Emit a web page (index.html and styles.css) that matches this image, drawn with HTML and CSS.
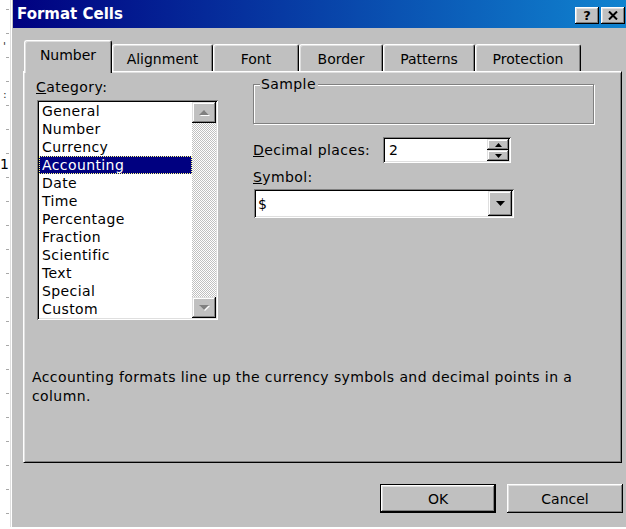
FILE: index.html
```html
<!DOCTYPE html>
<html lang="en">
<head>
<meta charset="utf-8">
<title>Format Cells</title>
<link rel="stylesheet" href="styles.css">
</head>
<body>
<div class="screen">
  <!-- worksheet cells peeking out from behind the dialog -->
  <div class="sheet-edge">
    <div class="sheet-row first"></div>
    <div class="sheet-row"></div>
    <div class="sheet-row"><span class="mark">'</span></div>
    <div class="sheet-row"></div>
    <div class="sheet-row"><span class="mark">:</span></div>
    <div class="sheet-row"></div>
    <div class="sheet-row"></div>
    <div class="sheet-row"><span class="digit">1</span></div>
  </div>

  <div class="dialog">
    <div class="titlebar">
      <span class="title">Format Cells</span>
      <div class="caption-buttons">
        <span class="cap-btn help">?</span>
        <span class="cap-btn close">
          <svg width="10" height="9" viewBox="0 0 10 9"><path d="M1 0.5 L9 8.5 M9 0.5 L1 8.5" stroke="#000" stroke-width="2" fill="none"/></svg>
        </span>
      </div>
    </div>

    <div class="dialog-body">
      <div class="tabs">
        <div class="tab active w-number">Number</div>
        <div class="tab w-alignment">Alignment</div>
        <div class="tab w-font">Font</div>
        <div class="tab w-border">Border</div>
        <div class="tab w-patterns">Patterns</div>
        <div class="tab w-protection">Protection</div>
      </div>

      <div class="panel">
        <div class="panel-top">
          <div class="category">
            <div class="label"><u>C</u>ategory:</div>
            <div class="listbox">
              <ul class="items">
                <li>General</li>
                <li>Number</li>
                <li>Currency</li>
                <li class="selected">Accounting</li>
                <li>Date</li>
                <li>Time</li>
                <li>Percentage</li>
                <li>Fraction</li>
                <li>Scientific</li>
                <li>Text</li>
                <li>Special</li>
                <li>Custom</li>
              </ul>
              <div class="vscroll">
                <div class="sbtn">
                  <svg width="13" height="8" viewBox="0 0 13 8"><polygon points="2,7 7,2 12,7" fill="#fff"/><polygon points="1,6 6,1 11,6" fill="#808080"/></svg>
                </div>
                <div class="track"></div>
                <div class="sbtn">
                  <svg width="13" height="8" viewBox="0 0 13 8"><polygon points="2,2 12,2 7,7" fill="#fff"/><polygon points="1,1 11,1 6,6" fill="#808080"/></svg>
                </div>
              </div>
            </div>
          </div>

          <div class="options">
            <div class="sample">
              <span class="sample-label">Sample</span>
            </div>

            <div class="decimal-row">
              <div class="label decimal-label"><u>D</u>ecimal places:</div>
              <div class="spin field">
                <span class="value">2</span>
                <div class="spin-btns">
                  <div class="spin-btn"><svg width="7" height="4" viewBox="0 0 7 4"><polygon points="0,4 3.5,0 7,4" fill="#000"/></svg></div>
                  <div class="spin-btn"><svg width="7" height="4" viewBox="0 0 7 4"><polygon points="0,0 7,0 3.5,4" fill="#000"/></svg></div>
                </div>
              </div>
            </div>

            <div class="label symbol-label"><u>S</u>ymbol:</div>
            <div class="combo field">
              <span class="value">$</span>
              <div class="drop-btn"><svg width="9" height="5" viewBox="0 0 9 5"><polygon points="0,0 9,0 4.5,5" fill="#000"/></svg></div>
            </div>
          </div>
        </div>

        <p class="desc">Accounting formats line up the currency symbols and decimal points in a column.</p>
      </div>

      <div class="actions">
        <span class="btn default">OK</span>
        <span class="btn">Cancel</span>
      </div>
    </div>
  </div>
</div>
</body>
</html>
```

FILE: styles.css
```css
* { box-sizing: border-box; }

html, body { margin: 0; padding: 0; }

body {
  width: 626px;
  height: 529px;
  overflow: hidden;
  background: #fff;
  font-family: "DejaVu Sans", "Liberation Sans", sans-serif;
  font-size: 14px;
  letter-spacing: 0.4px;
  color: #000;
}

.screen {
  display: flex;
  height: 529px;
}

/* ---- worksheet strip ---- */
.sheet-edge {
  width: 10px;
  flex: none;
  overflow: hidden;
  display: flex;
  flex-direction: column;
  background: linear-gradient(to bottom, #a8a8a8 0 1px, transparent 1px) 6px 9px / 3px 24px repeat-y;
}

.sheet-row {
  height: 24px;
  flex: none;
  line-height: 24px;
  white-space: nowrap;
}

.sheet-row.first { height: 9px; }

.sheet-row .mark {
  font-size: 11px;
  color: #333;
  padding-left: 3px;
}

.sheet-row .digit {
  display: block;
  margin-top: -1px;
}

/* ---- dialog frame ---- */
.dialog {
  width: 622px;
  height: 527px;
  flex: none;
  background: #c0c0c0;
  border-left: 1px solid #dfdfdf;
  box-shadow: inset 1px 0 #fff;
  padding: 0 3px 0 2px;
  display: flex;
  flex-direction: column;
}

.titlebar {
  height: 28px;
  flex: none;
  display: flex;
  align-items: center;
  padding: 0 4px 0 4px;
  background: linear-gradient(to right, #000080, #1084d0);
}

.title {
  color: #fff;
  font-weight: bold;
  font-size: 15px;
  letter-spacing: 0;
}

.caption-buttons {
  margin-left: auto;
  display: flex;
  gap: 2px;
  margin-top: 2px;
}

.cap-btn {
  width: 24px;
  height: 17px;
  display: flex;
  align-items: center;
  justify-content: center;
  background: #c0c0c0;
  font-weight: bold;
  font-size: 13px;
  letter-spacing: 0;
  line-height: 1;
  box-shadow: inset -1px -1px #000, inset 1px 1px #fff, inset -2px -2px #808080, inset 2px 2px #dfdfdf;
}

/* ---- body ---- */
.dialog-body {
  flex: 1;
  display: flex;
  flex-direction: column;
  padding: 12px 7px 0 10px;
}

.tabs {
  height: 31px;
  flex: none;
  display: flex;
  align-items: flex-end;
  padding-left: 1px;
  position: relative;
  z-index: 1;
  letter-spacing: 0;
}

.tab {
  height: 27px;
  flex: none;
  display: flex;
  align-items: center;
  justify-content: center;
  padding-top: 2px;
  background: #c0c0c0;
  border: 1px solid #fff;
  border-right-color: #000;
  border-bottom: none;
  border-radius: 3px 3px 0 0;
  box-shadow: inset 1px 1px #dfdfdf, inset -1px 0 #808080;
}

.tab.active {
  height: 33px;
  margin-bottom: -2px;
  padding-top: 0;
  padding-bottom: 4px;
}

.w-number { width: 88px; }
.w-alignment { width: 101px; }
.w-font { width: 86px; }
.w-border { width: 84px; }
.w-patterns { width: 92px; }
.w-protection { width: 106px; }

.panel {
  height: 392px;
  flex: none;
  border: 1px solid;
  border-color: #fff #000 #000 #fff;
  box-shadow: inset 1px 1px #dfdfdf, inset -1px -1px #808080;
  padding: 6px 12px 0 12px;
  display: flex;
  flex-direction: column;
}

.panel-top {
  display: flex;
  align-items: flex-start;
}

.label {
  line-height: 18px;
  height: 18px;
  white-space: nowrap;
}

.category {
  width: 182px;
  flex: none;
}

.listbox {
  margin-top: 4px;
  margin-left: 1px;
  width: 181px;
  height: 220px;
  background: #fff;
  padding: 2px;
  display: flex;
  box-shadow: inset 1px 1px #808080, inset -1px -1px #fff, inset 2px 2px #000, inset -2px -2px #dfdfdf;
}

.items {
  list-style: none;
  margin: 0;
  padding: 0;
  flex: 1;
}

.items li {
  height: 18px;
  line-height: 18px;
  padding-left: 3px;
  white-space: nowrap;
}

.items li.selected {
  background: #000080;
  color: #fff;
  outline: 1px dotted #ffff80;
  outline-offset: -1px;
}

.vscroll {
  width: 24px;
  flex: none;
  display: flex;
  flex-direction: column;
}

.sbtn {
  height: 21px;
  flex: none;
  display: flex;
  align-items: center;
  justify-content: center;
  background: #c0c0c0;
  box-shadow: inset -1px -1px #000, inset 1px 1px #dfdfdf, inset -2px -2px #808080, inset 2px 2px #fff;
}

.track {
  flex: 1;
  background-color: #fff;
  background-image: conic-gradient(#c0c0c0 25%, #fff 0 50%, #c0c0c0 0 75%, #fff 0);
  background-size: 2px 2px;
}

/* right column */
.options {
  margin-left: 35px;
  width: 341px;
  flex: none;
  padding-top: 6px;
}

.sample {
  position: relative;
  height: 40px;
  border: 1px solid #808080;
  box-shadow: 1px 1px #fff, inset 1px 1px #fff;
}

.sample-label {
  position: absolute;
  left: 6px;
  top: -10px;
  padding: 0 2px 0 1px;
  background: #c0c0c0;
  line-height: 18px;
}

.decimal-row {
  display: flex;
  align-items: center;
  margin-top: 13px;
}

.decimal-label { width: 130px; }

.field {
  background: #fff;
  padding: 2px;
  display: flex;
  align-items: stretch;
  box-shadow: inset 1px 1px #808080, inset -1px -1px #fff, inset 2px 2px #000, inset -2px -2px #dfdfdf;
}

.field .value {
  flex: 1;
  display: flex;
  align-items: center;
}

.spin {
  width: 128px;
  height: 26px;
}

.spin .value { padding-left: 4px; }

.spin-btns {
  width: 22px;
  display: flex;
  flex-direction: column;
}

.spin-btn {
  flex: 1;
  display: flex;
  align-items: center;
  justify-content: center;
  background: #c0c0c0;
  box-shadow: inset -1px -1px #000, inset 1px 1px #dfdfdf, inset -2px -2px #808080, inset 2px 2px #fff;
}

.symbol-label { margin-top: 5px; }

.combo {
  margin-top: 3px;
  margin-left: 1px;
  width: 260px;
  height: 29px;
}

.combo .value { padding-left: 2px; }

.drop-btn {
  width: 24px;
  display: flex;
  align-items: center;
  justify-content: center;
  background: #c0c0c0;
  box-shadow: inset -1px -1px #000, inset 1px 1px #dfdfdf, inset -2px -2px #808080, inset 2px 2px #fff;
}

.desc {
  margin: 48px 0 0 -4px;
  width: 575px;
  line-height: 19px;
}

/* ---- buttons ---- */
.actions {
  display: flex;
  justify-content: flex-end;
  gap: 11px;
  margin-top: 21px;
  margin-right: -1px;
  letter-spacing: 0;
}

.btn {
  width: 116px;
  height: 29px;
  display: flex;
  align-items: center;
  justify-content: center;
  background: #c0c0c0;
  box-shadow: inset -1px -1px #000, inset 1px 1px #fff, inset -2px -2px #808080, inset 2px 2px #dfdfdf;
}

.btn.default {
  border: 1px solid #000;
}
```
